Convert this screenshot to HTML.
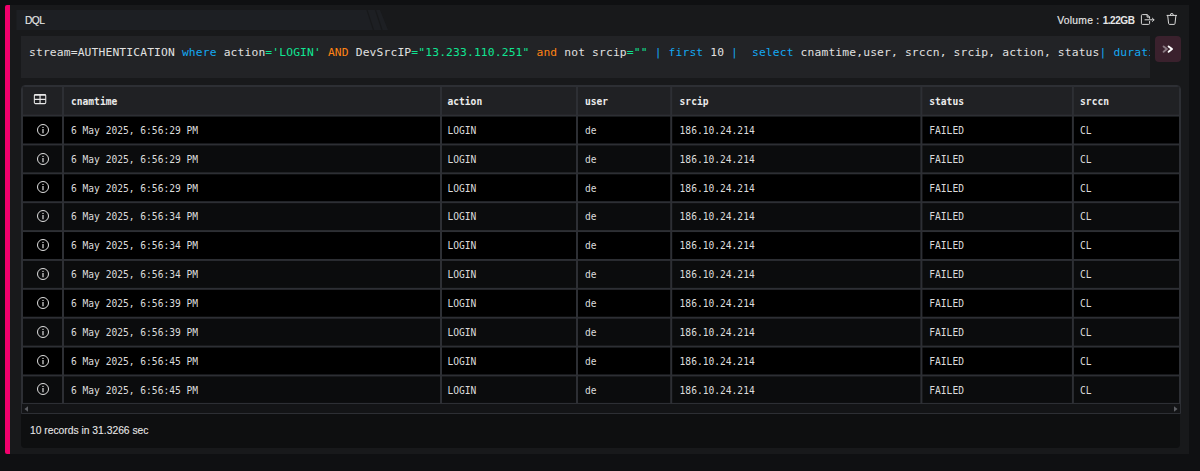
<!DOCTYPE html>
<html><head><meta charset="utf-8">
<style>
html,body{margin:0;padding:0;}
body{width:1200px;height:471px;background:#0f1012;overflow:hidden;position:relative;font-family:"Liberation Sans",sans-serif;}
.bar{position:absolute;left:5px;top:5px;width:5.300px;height:449px;background:#f2006c;border-radius:2px 0 0 2px;}
.card{position:absolute;left:10px;top:5px;width:1179px;height:449px;background:#18191b;}
.strip{position:absolute;left:16px;top:10px;width:372px;height:20px;}
.dql{position:absolute;left:25px;top:10px;height:20px;line-height:21.500px;font-size:10.2px;letter-spacing:-0.500px;color:#e6e6e6;-webkit-text-stroke:0.150px #e6e6e6;}
.vol{position:absolute;left:1057.300px;top:10px;height:20px;line-height:22.500px;font-size:10.3px;letter-spacing:0.250px;color:#e6e6e6;white-space:nowrap;-webkit-text-stroke:0.150px #e6e6e6;}
.vol b{-webkit-text-stroke:0;font-weight:bold;font-size:10px;letter-spacing:-0.450px;margin-left:0.200px;}
.ic{position:absolute;}
.query{position:absolute;left:21px;top:36px;width:1129px;height:42px;background:#222326;overflow:hidden;}
.query pre{margin:0;position:absolute;left:8px;top:10px;font-family:"DejaVu Sans Mono","Liberation Mono",monospace;font-size:11.3px;letter-spacing:0.149px;line-height:14px;color:#e0e0e0;white-space:pre;}
.kw{color:#14a8f2;}
.str{color:#10e592;}
.op{color:#ff8214;}
.btn{position:absolute;left:1155px;top:36px;width:26px;height:26px;background:#3a212d;border-radius:4px;}
.grid{position:absolute;left:21px;top:85px;width:1158px;height:327px;border:1px solid #2d2f34;border-radius:4px 4px 0 0;background:#131416;overflow:hidden;font-family:"DejaVu Sans Mono","Liberation Mono",monospace;font-size:9.6px;color:#dcdcdc;}
.r{position:absolute;left:0;width:1158px;display:flex;}
.r>div{box-sizing:border-box;border:1px solid transparent;height:100%;padding:1px 0 0 7px;white-space:nowrap;overflow:hidden;display:flex;align-items:center;flex:none;}
.r.h>div{font-weight:bold;color:#ececec;}
.bg{position:absolute;left:0;top:0;}
.r>div.c{padding:0;justify-content:center;}
.c1{width:41px}.c2{width:378px}.c3{width:136px;padding-left:5.500px !important}.c4{width:94px}.c5{width:250px;padding-left:7.600px !important}.c6{width:152px;padding-left:7.300px !important}.c7{width:107px;padding-left:6.100px !important}
.scroll{position:absolute;left:0;top:318px;width:1158px;height:9px;background:#131416;}
.foot{position:absolute;left:21.400px;top:414px;width:1159px;height:33.500px;background:#0e0f10;border-radius:0 0 4px 4px;}
.foot span{position:absolute;left:8.600px;top:0;line-height:34px;font-size:10.3px;letter-spacing:0px;color:#e6e6e6;-webkit-text-stroke:0.100px #e6e6e6;}
</style></head><body>
<div class="bar"></div>
<div class="card"></div>
<svg class="strip" viewBox="0 0 372 20"><polygon points="0.400,0 364,0 372,20 0.400,20" fill="#1d1f23"/><line x1="351" y1="0" x2="357.500" y2="20" stroke="#18191b" stroke-width="1.200"/><line x1="359.500" y1="0" x2="366" y2="20" stroke="#18191b" stroke-width="1.200"/></svg>
<div class="dql">DQL</div>
<div class="vol">Volume : <b>1.22GB</b></div>
<svg class="ic" style="left:1139px;top:11px" width="18" height="18" viewBox="0 0 18 18" fill="none" stroke="#d8d8d8" stroke-width="1" stroke-linecap="round" stroke-linejoin="round"><path d="M10.600 7.400V6L8.200 3.600H3.400a1 1 0 0 0-1 1v7.800a1 1 0 0 0 1 1h6.200a1 1 0 0 0 1-1v-2"/><path d="M8.100 3.700V6.100h2.400"/><path d="M6 8.800h9M13.400 7.200l1.600 1.600-1.600 1.600"/></svg>
<svg class="ic" style="left:1164px;top:11px" width="16" height="18" viewBox="0 0 16 18" fill="none" stroke="#d8d8d8" stroke-width="1" stroke-linecap="round" stroke-linejoin="round"><path d="M3 4.400h9.600M6.300 4.300l.6-1.700h1.800l.6 1.700M3.700 4.600l.9 7.900a1 1 0 0 0 1 .9h4.400a1 1 0 0 0 1-.9l.9-7.900"/></svg>
<div class="query"><pre>stream=AUTHENTICATION <span class="kw">where</span> action<span class="str">='LOGIN'</span> <span class="op">AND</span> DevSrcIP<span class="str">="13.233.110.251"</span> <span class="op">and</span> not srcip<span class="str">=""</span> <span class="kw">|</span> <span class="kw">first</span> 10 <span class="kw">|</span>  <span class="kw">select</span> cnamtime,user, srccn, srcip, action, status<span class="kw">|</span> <span class="kw">duration</span> 1h</pre></div>
<div class="btn"><svg width="26" height="26" viewBox="0 0 26 26" fill="none" stroke-width="1.900" stroke-linecap="round" stroke-linejoin="round"><path d="M8.600 10.400l3.300 2.700-3.300 2.700" stroke="#8a7a83"/><path d="M13.600 10.400l3.400 2.700-3.400 2.700" stroke="#ffffff"/></svg></div>
<div class="grid">
<svg class="bg" width="1158" height="318" viewBox="0 0 1158 318"><rect x="0" y="0" width="1158" height="29.600" fill="#202124"/><rect x="0" y="29.600" width="1158" height="28.875" fill="#000000"/><rect x="0" y="58.475" width="1158" height="28.875" fill="#0b0c0d"/><rect x="0" y="87.350" width="1158" height="28.875" fill="#000000"/><rect x="0" y="116.225" width="1158" height="28.875" fill="#0b0c0d"/><rect x="0" y="145.100" width="1158" height="28.875" fill="#000000"/><rect x="0" y="173.975" width="1158" height="28.875" fill="#0b0c0d"/><rect x="0" y="202.850" width="1158" height="28.875" fill="#000000"/><rect x="0" y="231.725" width="1158" height="28.875" fill="#0b0c0d"/><rect x="0" y="260.600" width="1158" height="28.875" fill="#000000"/><rect x="0" y="289.475" width="1158" height="28.525" fill="#0b0c0d"/><rect x="0" y="0" width="1158" height="1" fill="#2d2f34"/><rect x="0" y="28.600" width="1158" height="1.950" fill="#2d2f34"/><rect x="0" y="57.475" width="1158" height="1.950" fill="#2d2f34"/><rect x="0" y="86.350" width="1158" height="1.950" fill="#2d2f34"/><rect x="0" y="115.225" width="1158" height="1.950" fill="#2d2f34"/><rect x="0" y="144.100" width="1158" height="1.950" fill="#2d2f34"/><rect x="0" y="172.975" width="1158" height="1.950" fill="#2d2f34"/><rect x="0" y="201.850" width="1158" height="1.950" fill="#2d2f34"/><rect x="0" y="230.725" width="1158" height="1.950" fill="#2d2f34"/><rect x="0" y="259.600" width="1158" height="1.950" fill="#2d2f34"/><rect x="0" y="288.475" width="1158" height="1.950" fill="#2d2f34"/><rect x="0" y="316.900" width="1158" height="1.100" fill="#2d2f34"/><rect x="0" y="0" width="1" height="318" fill="#2d2f34"/><rect x="40" y="0" width="2" height="318" fill="#2d2f34"/><rect x="418" y="0" width="2" height="318" fill="#2d2f34"/><rect x="554" y="0" width="2" height="318" fill="#2d2f34"/><rect x="648.2" y="0" width="2" height="318" fill="#2d2f34"/><rect x="898.4" y="0" width="2" height="318" fill="#2d2f34"/><rect x="1049.9" y="0" width="2" height="318" fill="#2d2f34"/><rect x="1157" y="0" width="1" height="318" fill="#2d2f34"/></svg>
<div class="r h" style="top:0;height:29.400px"><div class="c c1"><svg style="position:absolute;left:11.300px;top:6.900px" width="14" height="12" viewBox="0 0 14 12" fill="none" stroke="#e8e8e8" stroke-width="1.100"><rect x="1.350" y="1.400" width="11.400" height="9.200" rx="1.200" stroke-width="1.050"/><path d="M1.350 2h11.400" stroke-width="1.700"/><path d="M7.050 2v8.500M1.350 6.300h11.400" stroke-width="1.150"/></svg></div><div class="c2">cnamtime</div><div class="c3">action</div><div class="c4">user</div><div class="c5">srcip</div><div class="c6">status</div><div class="c7">srccn</div></div>
<div class="r" style="top:29.40px;height:28.86px"><div class="c c1"><svg style="position:absolute;left:13.700px;top:7.300px" width="14" height="14" viewBox="0 0 14 14" fill="none" stroke="#e0e0e0" stroke-width="1"><circle cx="7" cy="7" r="5.500"/><path d="M7 6v4.300" stroke-width="1.200"/><circle cx="7" cy="4.400" r="0.700" fill="#e0e0e0" stroke="none"/></svg></div><div class="c2">6 May 2025, 6:56:29 PM</div><div class="c3">LOGIN</div><div class="c4">de</div><div class="c5">186.10.24.214</div><div class="c6">FAILED</div><div class="c7">CL</div></div>
<div class="r e" style="top:58.26px;height:28.86px"><div class="c c1"><svg style="position:absolute;left:13.700px;top:7.300px" width="14" height="14" viewBox="0 0 14 14" fill="none" stroke="#e0e0e0" stroke-width="1"><circle cx="7" cy="7" r="5.500"/><path d="M7 6v4.300" stroke-width="1.200"/><circle cx="7" cy="4.400" r="0.700" fill="#e0e0e0" stroke="none"/></svg></div><div class="c2">6 May 2025, 6:56:29 PM</div><div class="c3">LOGIN</div><div class="c4">de</div><div class="c5">186.10.24.214</div><div class="c6">FAILED</div><div class="c7">CL</div></div>
<div class="r" style="top:87.12px;height:28.86px"><div class="c c1"><svg style="position:absolute;left:13.700px;top:7.300px" width="14" height="14" viewBox="0 0 14 14" fill="none" stroke="#e0e0e0" stroke-width="1"><circle cx="7" cy="7" r="5.500"/><path d="M7 6v4.300" stroke-width="1.200"/><circle cx="7" cy="4.400" r="0.700" fill="#e0e0e0" stroke="none"/></svg></div><div class="c2">6 May 2025, 6:56:29 PM</div><div class="c3">LOGIN</div><div class="c4">de</div><div class="c5">186.10.24.214</div><div class="c6">FAILED</div><div class="c7">CL</div></div>
<div class="r e" style="top:115.98px;height:28.86px"><div class="c c1"><svg style="position:absolute;left:13.700px;top:7.300px" width="14" height="14" viewBox="0 0 14 14" fill="none" stroke="#e0e0e0" stroke-width="1"><circle cx="7" cy="7" r="5.500"/><path d="M7 6v4.300" stroke-width="1.200"/><circle cx="7" cy="4.400" r="0.700" fill="#e0e0e0" stroke="none"/></svg></div><div class="c2">6 May 2025, 6:56:34 PM</div><div class="c3">LOGIN</div><div class="c4">de</div><div class="c5">186.10.24.214</div><div class="c6">FAILED</div><div class="c7">CL</div></div>
<div class="r" style="top:144.84px;height:28.86px"><div class="c c1"><svg style="position:absolute;left:13.700px;top:7.300px" width="14" height="14" viewBox="0 0 14 14" fill="none" stroke="#e0e0e0" stroke-width="1"><circle cx="7" cy="7" r="5.500"/><path d="M7 6v4.300" stroke-width="1.200"/><circle cx="7" cy="4.400" r="0.700" fill="#e0e0e0" stroke="none"/></svg></div><div class="c2">6 May 2025, 6:56:34 PM</div><div class="c3">LOGIN</div><div class="c4">de</div><div class="c5">186.10.24.214</div><div class="c6">FAILED</div><div class="c7">CL</div></div>
<div class="r e" style="top:173.70px;height:28.86px"><div class="c c1"><svg style="position:absolute;left:13.700px;top:7.300px" width="14" height="14" viewBox="0 0 14 14" fill="none" stroke="#e0e0e0" stroke-width="1"><circle cx="7" cy="7" r="5.500"/><path d="M7 6v4.300" stroke-width="1.200"/><circle cx="7" cy="4.400" r="0.700" fill="#e0e0e0" stroke="none"/></svg></div><div class="c2">6 May 2025, 6:56:34 PM</div><div class="c3">LOGIN</div><div class="c4">de</div><div class="c5">186.10.24.214</div><div class="c6">FAILED</div><div class="c7">CL</div></div>
<div class="r" style="top:202.56px;height:28.86px"><div class="c c1"><svg style="position:absolute;left:13.700px;top:7.300px" width="14" height="14" viewBox="0 0 14 14" fill="none" stroke="#e0e0e0" stroke-width="1"><circle cx="7" cy="7" r="5.500"/><path d="M7 6v4.300" stroke-width="1.200"/><circle cx="7" cy="4.400" r="0.700" fill="#e0e0e0" stroke="none"/></svg></div><div class="c2">6 May 2025, 6:56:39 PM</div><div class="c3">LOGIN</div><div class="c4">de</div><div class="c5">186.10.24.214</div><div class="c6">FAILED</div><div class="c7">CL</div></div>
<div class="r e" style="top:231.42px;height:28.86px"><div class="c c1"><svg style="position:absolute;left:13.700px;top:7.300px" width="14" height="14" viewBox="0 0 14 14" fill="none" stroke="#e0e0e0" stroke-width="1"><circle cx="7" cy="7" r="5.500"/><path d="M7 6v4.300" stroke-width="1.200"/><circle cx="7" cy="4.400" r="0.700" fill="#e0e0e0" stroke="none"/></svg></div><div class="c2">6 May 2025, 6:56:39 PM</div><div class="c3">LOGIN</div><div class="c4">de</div><div class="c5">186.10.24.214</div><div class="c6">FAILED</div><div class="c7">CL</div></div>
<div class="r" style="top:260.28px;height:28.86px"><div class="c c1"><svg style="position:absolute;left:13.700px;top:7.300px" width="14" height="14" viewBox="0 0 14 14" fill="none" stroke="#e0e0e0" stroke-width="1"><circle cx="7" cy="7" r="5.500"/><path d="M7 6v4.300" stroke-width="1.200"/><circle cx="7" cy="4.400" r="0.700" fill="#e0e0e0" stroke="none"/></svg></div><div class="c2">6 May 2025, 6:56:45 PM</div><div class="c3">LOGIN</div><div class="c4">de</div><div class="c5">186.10.24.214</div><div class="c6">FAILED</div><div class="c7">CL</div></div>
<div class="r e" style="top:289.14px;height:28.86px"><div class="c c1"><svg style="position:absolute;left:13.700px;top:7.300px" width="14" height="14" viewBox="0 0 14 14" fill="none" stroke="#e0e0e0" stroke-width="1"><circle cx="7" cy="7" r="5.500"/><path d="M7 6v4.300" stroke-width="1.200"/><circle cx="7" cy="4.400" r="0.700" fill="#e0e0e0" stroke="none"/></svg></div><div class="c2">6 May 2025, 6:56:45 PM</div><div class="c3">LOGIN</div><div class="c4">de</div><div class="c5">186.10.24.214</div><div class="c6">FAILED</div><div class="c7">CL</div></div>
<div class="scroll"><svg style="position:absolute;left:2px;top:2px" width="5" height="6" viewBox="0 0 5 6"><path d="M4 0.200L0.500 3 4 5.800z" fill="#5c5e63"/></svg><svg style="position:absolute;right:2px;top:2px" width="5" height="6" viewBox="0 0 5 6"><path d="M1 0.200L4.500 3 1 5.800z" fill="#5c5e63"/></svg></div>
</div>
<div class="foot"><span>10 records in 31.3266 sec</span></div>
</body></html>
